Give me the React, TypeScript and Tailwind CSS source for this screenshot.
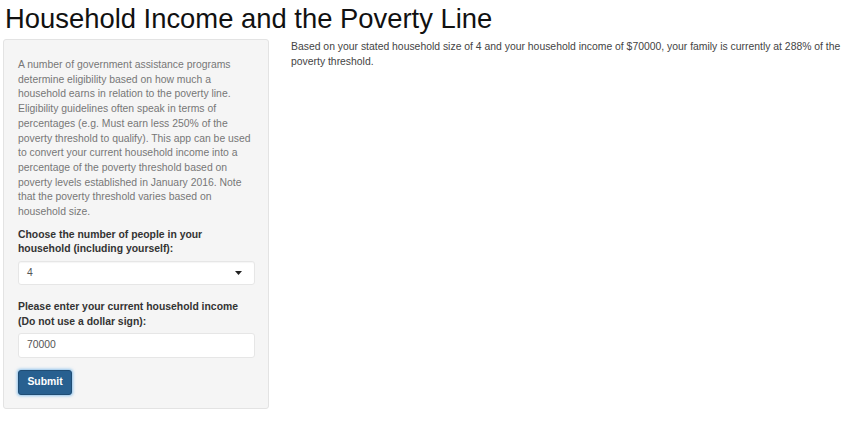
const intro = [
  "A number of government assistance programs",
  "determine eligibility based on how much a",
  "household earns in relation to the poverty line.",
  "Eligibility guidelines often speak in terms of",
  "percentages (e.g. Must earn less 250% of the",
  "poverty threshold to qualify). This app can be used",
  "to convert your current household income into a",
  "percentage of the poverty threshold based on",
  "poverty levels established in January 2016. Note",
  "that the poverty threshold varies based on",
  "household size.",
];

export default function App() {
  return (
    <div className="min-h-[431px] bg-white text-[#333] [font-family:'Liberation_Sans',Arial,sans-serif]">
      <h1 className="pl-[5px] pt-[3px] text-[27.4px] leading-[32px] text-[#111]">
        Household Income and the Poverty Line
      </h1>
      <div className="mt-[4px] flex items-start gap-[22px]">
        <div className="ml-[3px] w-[266px] shrink-0 rounded-[3px] border border-[#e3e3e3] bg-[#f5f5f5] px-[14px] pb-[13px] pt-[18px]">
          <p className="whitespace-nowrap text-[10.4px] leading-[14.7px] text-[#777]">
            {intro.map((line) => (
              <span key={line} className="block">
                {line}
              </span>
            ))}
          </p>
          <label className="mt-[8px] block whitespace-nowrap text-[10.4px] font-bold leading-[14.7px] text-[#333]">
            Choose the number of people in your
            <br />
            household (including yourself):
          </label>
          <div className="mt-[4px] flex h-[24px] w-[237px] items-center justify-between rounded-[3px] border border-[#e6e6e6] bg-white pl-[8px] pr-[12px] shadow-[inset_0_1px_1px_rgba(0,0,0,0.04)]">
            <span className="text-[10.4px] text-[#555]">4</span>
            <svg width="7" height="4" viewBox="0 0 7 4">
              <path d="M0 0h7L3.5 4z" fill="#222" />
            </svg>
          </div>
          <label className="mt-[15px] block whitespace-nowrap text-[10.4px] font-bold leading-[14.7px] text-[#333]">
            Please enter your current household income
            <br />
            (Do not use a dollar sign):
          </label>
          <div className="mt-[3px] flex h-[25px] w-[237px] items-center rounded-[3px] border border-[#e6e6e6] bg-white pl-[8px]">
            <span className="text-[10.4px] text-[#555]">70000</span>
          </div>
          <button className="mt-[12px] h-[25px] w-[54px] rounded-[3px] border border-[#204d74] bg-[#286090] text-[10.4px] font-bold text-white shadow-[0_0_3px_1px_rgba(102,175,233,0.7)]">
            Submit
          </button>
        </div>
        <p className="whitespace-nowrap pt-[1px] text-[10.4px] leading-[14.7px] text-[#444]">
          Based on your stated household size of 4 and your household income of $70000, your family is
          currently at 288% of the
          <br />
          poverty threshold.
        </p>
      </div>
    </div>
  );
}
